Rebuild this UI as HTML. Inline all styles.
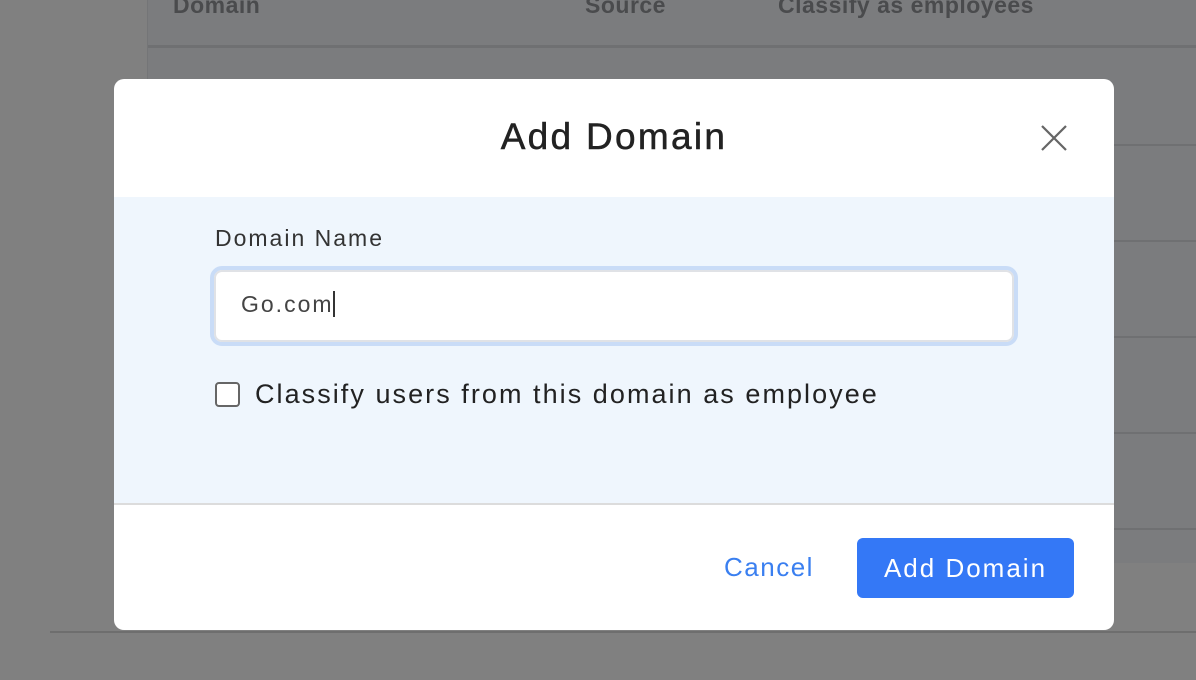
<!DOCTYPE html>
<html><head><style>
*{margin:0;padding:0;box-sizing:border-box}
body{width:1196px;height:680px;background:#808080;position:relative;overflow:hidden;font-family:"Liberation Sans",sans-serif}
.tbl{position:absolute;left:147px;top:0;width:1049px;height:563px;background:#7b7c7e;border-left:1px solid #747577}
.hd{position:absolute;top:-8px;font-size:23px;font-weight:bold;color:#4a4b4d;letter-spacing:0.5px}
.ln{position:absolute;left:0;right:0;height:2px;background:#6f7072}
.modal{position:absolute;left:114px;top:79px;width:1000px;height:551px;background:#fff;border-radius:10px;overflow:hidden}
.title{position:absolute;top:37px;left:0;width:1000px;text-align:center;font-size:37px;color:#222;letter-spacing:2.3px;-webkit-text-stroke:0.5px #222}
.body{position:absolute;top:118px;left:0;width:1000px;height:308px;background:#eff6fd;border-bottom:2px solid #dcdcdc}
.lbl{position:absolute;left:101px;top:28px;font-size:23px;color:#333;letter-spacing:2px}
.inp{position:absolute;left:96px;top:69px;width:808px;height:80px;border:4px solid #c9dcf7;border-radius:12px}
.inp div{position:absolute;inset:0;border:2px solid #e0e2e6;border-radius:8px;background:#fff;padding:19px 0 0 25px;font-size:23px;color:#444;letter-spacing:2px}
.cb{position:absolute;left:101px;top:185px;width:25px;height:25px;border:2px solid #666;border-radius:4px;background:#fff}
.cbt{position:absolute;left:141px;top:182px;font-size:27px;color:#222;letter-spacing:2.05px}
.cancel{position:absolute;left:610px;top:473px;font-size:26px;color:#3a7ff0;letter-spacing:1.5px}
.btn{position:absolute;left:743px;top:459px;width:217px;height:60px;background:#3478f6;border-radius:6px;color:#fff;font-size:26px;text-align:center;line-height:60px;letter-spacing:2px}
</style></head><body>
<div class="tbl">
<div class="hd" style="left:25px">Domain</div>
<div class="hd" style="left:437px">Source</div>
<div class="hd" style="left:630px">Classify as employees</div>
<div class="ln" style="top:45px;height:3px"></div>
<div class="ln" style="top:144px"></div>
<div class="ln" style="top:240px"></div>
<div class="ln" style="top:336px"></div>
<div class="ln" style="top:432px"></div>
<div class="ln" style="top:528px"></div>
</div>
<div style="position:absolute;left:50px;top:631px;width:1146px;height:2px;background:#6e6e6e"></div>
<div class="modal">
<div class="title">Add Domain</div>
<svg style="position:absolute;left:927px;top:46px" width="26" height="26" viewBox="0 0 26 26"><path d="M1 1L25 25M25 1L1 25" stroke="#666" stroke-width="2.2"/></svg>
<div class="body">
<div class="lbl">Domain Name</div>
<div class="inp"><div>Go.com<span style="border-left:2px solid #333;margin-left:-1px"></span></div></div>
<div class="cb"></div>
<div class="cbt">Classify users from this domain as employee</div>
</div>
<div class="cancel">Cancel</div>
<div class="btn">Add Domain</div>
</div>
</body></html>
